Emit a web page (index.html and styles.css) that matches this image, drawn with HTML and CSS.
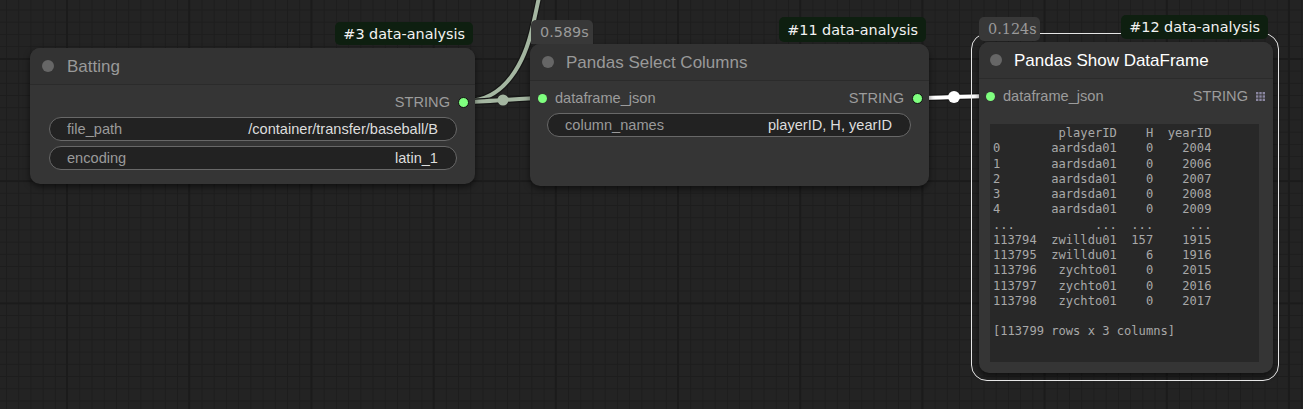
FILE: index.html
```html
<!DOCTYPE html>
<html>
<head>
<meta charset="utf-8">
<title>Graph</title>
<link rel="stylesheet" href="styles.css">
</head>
<body>
<div class="canvas">
  <svg class="links" width="1303" height="409" viewBox="0 0 1303 409">
    <path class="edge-outline" d="M466 101 C 505 101, 525 62, 533 25 S 541 -10, 543 -30"/>
    <path class="edge-green" d="M466 101 C 505 101, 525 62, 533 25 S 541 -10, 543 -30"/>
    <path class="edge-outline" d="M464 102 C 486 102, 520 98, 542 98"/>
    <path class="edge-green" d="M464 102 C 486 102, 520 98, 542 98"/>
    <circle class="mid-green" cx="503" cy="100" r="5.5"/>
    <path class="edge-outline" d="M918 98 C 936 98, 972 96, 990 96"/>
    <path class="edge-white" d="M918 98 C 936 98, 972 96, 990 96"/>
    <circle class="mid-white" cx="954" cy="97" r="6"/>
  </svg>

  <div class="node node-batting">
    <div class="badge-id">#3 data-analysis</div>
    <div class="node-title"><span class="title-dot"></span><span class="title-text">Batting</span></div>
    <div class="node-body">
      <div class="slot-row slot-row-end">
        <span class="slot-label">STRING</span><span class="dot dot-out"></span>
      </div>
      <div class="widgets">
        <div class="widget"><span class="w-label">file_path</span><span class="w-value">/container/transfer/baseball/B</span></div>
        <div class="widget"><span class="w-label">encoding</span><span class="w-value">latin_1</span></div>
      </div>
    </div>
  </div>

  <div class="node node-select">
    <div class="badge-time">0.589s</div>
    <div class="badge-id">#11 data-analysis</div>
    <div class="node-title"><span class="title-dot"></span><span class="title-text">Pandas Select Columns</span></div>
    <div class="node-body">
      <div class="slot-row">
        <span class="slot-in"><span class="dot dot-in"></span><span class="slot-label">dataframe_json</span></span>
        <span class="slot-out"><span class="slot-label">STRING</span><span class="dot dot-out"></span></span>
      </div>
      <div class="widgets">
        <div class="widget"><span class="w-label">column_names</span><span class="w-value">playerID, H, yearID</span></div>
      </div>
    </div>
  </div>

  <div class="node node-show">
    <div class="select-outline"></div>
    <div class="badge-time badge-time-serif">0.124s</div>
    <div class="badge-id">#12 data-analysis</div>
    <div class="node-title"><span class="title-dot"></span><span class="title-text title-active">Pandas Show DataFrame</span></div>
    <div class="node-body">
      <div class="slot-row">
        <span class="slot-in"><span class="dot dot-in"></span><span class="slot-label">dataframe_json</span></span>
        <span class="slot-out slot-out-grid"><span class="slot-label">STRING</span>
          <svg class="grid-icon" width="9" height="9" viewBox="0 0 9 9">
            <rect x="0" y="0" width="2.4" height="2.4"/><rect x="3.3" y="0" width="2.4" height="2.4"/><rect x="6.6" y="0" width="2.4" height="2.4"/>
            <rect x="0" y="3.3" width="2.4" height="2.4"/><rect x="3.3" y="3.3" width="2.4" height="2.4"/><rect x="6.6" y="3.3" width="2.4" height="2.4"/>
            <rect x="0" y="6.6" width="2.4" height="2.4"/><rect x="3.3" y="6.6" width="2.4" height="2.4"/><rect x="6.6" y="6.6" width="2.4" height="2.4"/>
          </svg>
        </span>
      </div>
      <pre class="df-output">         playerID    H  yearID
0       aardsda01    0    2004
1       aardsda01    0    2006
2       aardsda01    0    2007
3       aardsda01    0    2008
4       aardsda01    0    2009
...           ...  ...     ...
113794  zwilldu01  157    1915
113795  zwilldu01    6    1916
113796   zychto01    0    2015
113797   zychto01    0    2016
113798   zychto01    0    2017

[113799 rows x 3 columns]</pre>
    </div>
  </div>
</div>
</body>
</html>
```

FILE: styles.css
```css
html, body {
  margin: 0;
  padding: 0;
  background: #232323;
}

.canvas {
  position: relative;
  width: 1303px;
  height: 409px;
  overflow: hidden;
  font-family: "Liberation Sans", Arial, sans-serif;
  background-color: #232323;
  background-image:
    linear-gradient(to right, #1b1b1b 2px, transparent 2px),
    linear-gradient(to bottom, #1b1b1b 2px, transparent 2px),
    linear-gradient(to right, #1d1d1d 1px, transparent 1px),
    linear-gradient(to bottom, #1d1d1d 1px, transparent 1px);
  background-size: 122.2px 122.2px, 122.2px 122.2px, 12.22px 12.22px, 12.22px 12.22px;
  background-position: 66px 0, 0 58px, 6px 0, 0 9.5px;
}

.links {
  position: absolute;
  left: 0;
  top: 0;
  overflow: visible;
}

.edge-outline {
  fill: none;
  stroke: #161616;
  stroke-width: 6.5;
}

.edge-green {
  fill: none;
  stroke: #a4b6a1;
  stroke-width: 4;
}

.edge-white {
  fill: none;
  stroke: #ffffff;
  stroke-width: 4;
}

.mid-green {
  fill: #a4b6a1;
}

.mid-white {
  fill: #ffffff;
}

/* nodes */
.node {
  position: absolute;
  background: #353535;
  border-radius: 10px;
  box-shadow: 0 3px 6px rgba(0, 0, 0, 0.55);
  display: flex;
  flex-direction: column;
}

.node-batting {
  left: 30px;
  top: 48px;
  width: 445px;
  height: 136px;
}

.node-select {
  left: 530px;
  top: 44px;
  width: 399px;
  height: 142px;
}

.node-show {
  left: 979px;
  top: 42px;
  width: 294px;
  height: 331px;
}

.node-title {
  height: 36px;
  border-bottom: 1px solid #2b2b2b;
  background: #333333;
  border-radius: 10px 10px 0 0;
  display: flex;
  align-items: center;
  padding-left: 12px;
  gap: 13px;
  flex-shrink: 0;
}

.node-select .node-title,
.node-show .node-title {
  gap: 12px;
}

.node-show .node-title {
  padding-left: 11px;
}

.title-dot {
  width: 12px;
  height: 12px;
  border-radius: 50%;
  background: #666666;
  flex-shrink: 0;
}

.title-text {
  font-size: 17px;
  color: #999999;
  line-height: 1;
  padding-top: 1px;
}

.title-active {
  color: #ffffff;
}

.node-body {
  padding-top: 5px;
  display: flex;
  flex-direction: column;
}

.slot-row {
  height: 24px;
  display: flex;
  align-items: center;
  justify-content: space-between;
  padding: 0 6px 0 7px;
}

.slot-row-end {
  justify-content: flex-end;
}

.slot-in,
.slot-out {
  display: flex;
  align-items: center;
}

.slot-in {
  gap: 8px;
}

.slot-out {
  gap: 8px;
}

.slot-row-end {
  gap: 8px;
}

.slot-out-grid {
  padding-right: 2px;
}

.slot-label {
  font-size: 14.6px;
  color: #9c9c9c;
  line-height: 1;
}

.dot {
  width: 9px;
  height: 9px;
  border-radius: 50%;
  background: #7fff7f;
  box-sizing: border-box;
}

.dot-out {
  width: 11px;
  height: 11px;
  border: 1.5px solid #111111;
}

.dot-in {
  margin-left: 1px;
}

.node-show .dot-in {
  margin-left: 0;
}

.grid-icon {
  fill: #8a86a0;
}

.widgets {
  margin-top: 3px;
  padding: 0 18px 0 19px;
  display: flex;
  flex-direction: column;
  gap: 5px;
}

.node-select .widgets {
  padding: 0 18px 0 17px;
}

.widget {
  height: 24px;
  box-sizing: border-box;
  border: 1px solid #686868;
  border-radius: 12px;
  background: #222222;
  display: flex;
  align-items: center;
  justify-content: space-between;
  padding: 0 18px 0 17px;
  font-size: 14.6px;
  line-height: 1;
}

.w-label {
  color: #9a9a9a;
}

.w-value {
  color: #dddddd;
}

.df-output {
  margin: 16px 14px 0 11px;
  height: 238px;
  box-sizing: border-box;
  background: #282828;
  padding: 2px 3px;
  font-family: "DejaVu Sans Mono", monospace;
  font-size: 12.1px;
  line-height: 15.25px;
  color: #a8a8a8;
  overflow: hidden;
}

/* badges */
.badge-id {
  position: absolute;
  right: 2px;
  bottom: calc(100% + 3px);
  height: 23px;
  padding: 0 8px;
  border-radius: 5px;
  background: #0e1f10;
  color: #f2f2f2;
  font-family: "DejaVu Sans", sans-serif;
  font-size: 14.4px;
  display: flex;
  align-items: center;
  z-index: 2;
}

.node-select .badge-id {
  right: 3px;
  bottom: calc(100% + 2px);
  height: 25px;
}

.node-show .badge-id {
  right: 5px;
  bottom: calc(100% + 3px);
  height: 24px;
}

.badge-time {
  position: absolute;
  left: 1px;
  bottom: 100%;
  height: 24px;
  padding: 0 4px 0 9px;
  border-radius: 5px 5px 0 0;
  background: #383838;
  color: #9a9a9a;
  font-family: "DejaVu Sans", sans-serif;
  font-size: 14.4px;
  display: flex;
  align-items: center;
  z-index: 2;
}

.badge-time-serif {
  left: 0;
  bottom: calc(100% + 1px);
  font-family: "DejaVu Serif", serif;
  padding: 0 3px 0 9px;
  border-radius: 5px;
}

.select-outline {
  position: absolute;
  left: -8px;
  right: -6px;
  top: -9px;
  bottom: -8px;
  border: 1.5px solid #e6e6e6;
  border-radius: 16px;
  pointer-events: none;
  z-index: 1;
}
```
